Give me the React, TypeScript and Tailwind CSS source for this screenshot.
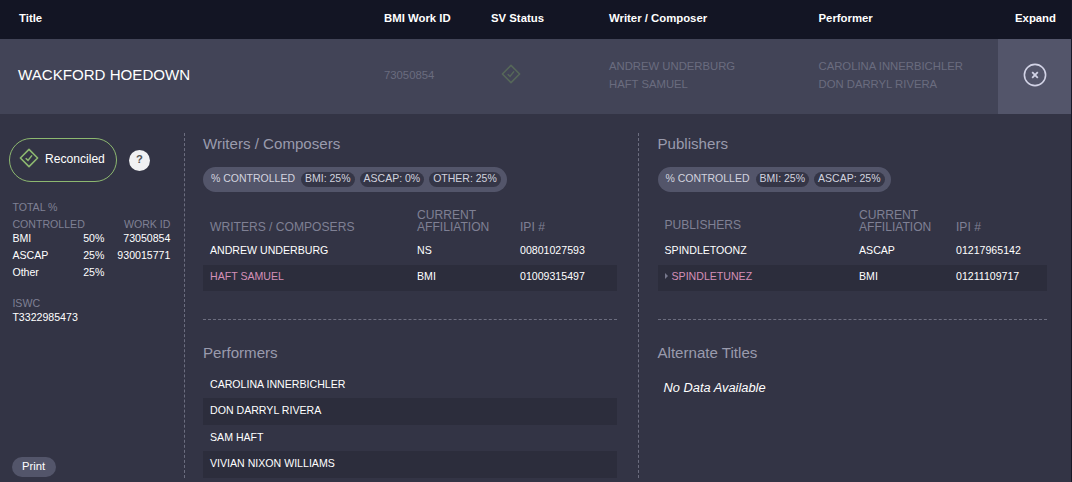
import clsx from "clsx";

interface Share {
  label: string;
  value: string;
}

interface PartyData {
  name: string;
  affiliation: string;
  ipi: string;
  highlighted?: boolean;
  expandable?: boolean;
}

const writers: PartyData[] = [
  { name: "ANDREW UNDERBURG", affiliation: "NS", ipi: "00801027593" },
  { name: "HAFT SAMUEL", affiliation: "BMI", ipi: "01009315497", highlighted: true },
];

const publishers: PartyData[] = [
  { name: "SPINDLETOONZ", affiliation: "ASCAP", ipi: "01217965142" },
  {
    name: "SPINDLETUNEZ",
    affiliation: "BMI",
    ipi: "01211109717",
    highlighted: true,
    expandable: true,
  },
];

const performers = [
  "CAROLINA INNERBICHLER",
  "DON DARRYL RIVERA",
  "SAM HAFT",
  "VIVIAN NIXON WILLIAMS",
];

const controlled = [
  { society: "BMI", share: "50%", workId: "73050854" },
  { society: "ASCAP", share: "25%", workId: "930015771" },
  { society: "Other", share: "25%", workId: "" },
];

const DiamondCheck = ({ className }: { className?: string }) => (
  <svg viewBox="0 0 20 20" fill="none" stroke="currentColor" className={className}>
    <path d="M10 1.4 18.6 10 10 18.6 1.4 10Z" strokeWidth="1.6" strokeLinejoin="round" />
    <path d="m6.7 10.2 2.3 2.2 4-5" strokeWidth="1.5" />
  </svg>
);

const SectionTitle = ({ children }: { children: string }) => (
  <h2 className="text-[15.1px] leading-[18px] text-[#9a9bad]">{children}</h2>
);

const ShareBar = ({ shares }: { shares: Share[] }) => (
  <div className="mt-3.5 flex h-[25px] w-fit items-center rounded-full bg-[#53556a] pr-1.5 pl-2 text-[10.5px] text-[#d2d3df]">
    <span className="mr-[6px] pb-[3px] leading-[14px]">% CONTROLLED</span>
    <div className="flex gap-[5px]">
      {shares.map((share) => (
        <span
          key={share.label}
          className="h-[15px] rounded-full bg-[#353647] px-[4px] leading-[13px]"
        >
          {share.label}: {share.value}
        </span>
      ))}
    </div>
  </div>
);

interface PartyTableProps {
  title: string;
  parties: PartyData[];
  columns: string;
  titleClass?: string;
}

const PartyTable = ({ title, parties, columns, titleClass }: PartyTableProps) => (
  <div className="mt-[17px]">
    <div
      className={clsx(
        "grid h-[30px] items-end pb-1.5 pl-[7px] text-[12.1px] leading-3 text-[#7f8094]",
        columns
      )}
    >
      <span className={titleClass}>{title}</span>
      <span>
        CURRENT
        <br />
        AFFILIATION
      </span>
      <span>IPI #</span>
    </div>
    {parties.map((party, i) => (
      <div
        key={party.ipi}
        className={clsx(
          "grid h-[26px] items-center pb-[3px] pl-[7px] text-[10.6px] text-white",
          columns,
          i % 2 === 1 && "bg-[#2c2d3c]"
        )}
      >
        <span className={clsx("flex items-center", party.highlighted && "text-[#d490b8]")}>
          {party.expandable && (
            <svg viewBox="0 0 3 6" className="mr-[4px] h-1.5 w-[3px]" fill="#77788c">
              <path d="M0 0 3 3 0 6Z" />
            </svg>
          )}
          {party.name}
        </span>
        <span>{party.affiliation}</span>
        <span>{party.ipi}</span>
      </div>
    ))}
  </div>
);

const Sidebar = () => (
  <aside className="flex w-[184px] flex-col pt-[5px] pb-px">
    <div className="flex items-center">
      <div className="ml-[9px] flex h-11 w-[108px] items-center rounded-full border border-[#8db870] pl-[9px]">
        <DiamondCheck className="mb-1 h-5 w-5 text-[#8db870]" />
        <span className="ml-[6px] pb-[2px] text-[12.1px] text-white">Reconciled</span>
      </div>
      <span className="ml-3 flex h-[21px] w-[21px] items-center justify-center rounded-full bg-[#f1f1f3] pb-[2px] text-[11.25px] font-bold text-[#555]">
        ?
      </span>
    </div>
    <div className="mt-[17px] ml-[12.4px] w-[158px] text-[10.6px] leading-[17px] text-white">
      <div className="flex items-end justify-between text-[#7f8094]">
        <span>
          TOTAL %
          <br />
          CONTROLLED
        </span>
        <span>WORK ID</span>
      </div>
      <div className="-mt-[3px]">
        {controlled.map((row) => (
          <div key={row.society} className="grid grid-cols-[55px_37px_1fr]">
            <span>{row.society}</span>
            <span className="text-right">{row.share}</span>
            <span className="text-right">{row.workId}</span>
          </div>
        ))}
      </div>
      <div className="mt-[15px] leading-[14px]">
        <div className="text-[#7f8094]">ISWC</div>
        <div>T3322985473</div>
      </div>
    </div>
    <button
      type="button"
      className="mt-auto ml-3 h-5 w-11 rounded-full bg-[#53556a] pr-px pb-px text-[11.25px] leading-[19px] text-white"
    >
      Print
    </button>
  </aside>
);

const workColumns = "grid-cols-[384px_107px_118px_209.5px_179.5px_73px]";

export default function App() {
  return (
    <div className="h-[482px] w-[1072px] overflow-hidden border-r border-[#181928] bg-[#333445] font-['Liberation_Sans',Arial,sans-serif]">
      <header
        className={clsx(
          "grid h-[39px] items-center bg-[#131524] pb-[2px] text-[11.35px] font-bold text-white",
          workColumns
        )}
      >
        <span className="pl-[19px]">Title</span>
        <span>BMI Work ID</span>
        <span>SV Status</span>
        <span>Writer / Composer</span>
        <span>Performer</span>
        <span className="pl-[17px]">Expand</span>
      </header>

      <div
        className={clsx(
          "grid h-[75px] items-center bg-[#424457] text-[11.3px] leading-[18px] text-[#6a6c7f]",
          workColumns
        )}
      >
        <span className="pb-[3px] pl-[18px] text-[15.1px] text-white">WACKFORD HOEDOWN</span>
        <span className="pb-[3px]">73050854</span>
        <DiamondCheck className="mb-[5px] ml-2.5 h-5 w-5 text-[#566759]" />
        <div className="pb-[3px]">
          <div>ANDREW UNDERBURG</div>
          <div>HAFT SAMUEL</div>
        </div>
        <div className="pb-[3px]">
          <div>CAROLINA INNERBICHLER</div>
          <div>DON DARRYL RIVERA</div>
        </div>
        <button
          type="button"
          className="flex h-full items-center justify-center bg-[#53556a] pb-[3px]"
        >
          <svg viewBox="0 0 24 24" className="h-6 w-6" fill="none" stroke="#d2d3e6">
            <circle cx="12" cy="12" r="10.6" strokeWidth="1.6" />
            <path d="m9.2 9.2 5.6 5.6m0-5.6-5.6 5.6" strokeWidth="1.8" />
          </svg>
        </button>
      </div>

      <main className="flex h-[368px] pt-[19px] pb-1">
        <Sidebar />

        <section className="w-[454px] border-l border-dashed border-[#6c6d7f] pt-[2px] pr-[21px] pl-[18px]">
          <SectionTitle>Writers / Composers</SectionTitle>
          <ShareBar
            shares={[
              { label: "BMI", value: "25%" },
              { label: "ASCAP", value: "0%" },
              { label: "OTHER", value: "25%" },
            ]}
          />
          <PartyTable
            title="WRITERS / COMPOSERS"
            parties={writers}
            columns="grid-cols-[207px_103px_1fr]"
          />
          <div className="mt-7 mb-6 border-t border-dashed border-[#6c6d7f]" />
          <SectionTitle>Performers</SectionTitle>
          <ul className="mt-[9.5px] text-[10.6px] text-white">
            {performers.map((name, i) => (
              <li
                key={name}
                className={clsx(
                  "flex h-[26.5px] items-center pl-[7px]",
                  i % 2 === 1 ? "bg-[#2c2d3c] pb-px" : "pt-px"
                )}
              >
                {name}
              </li>
            ))}
          </ul>
        </section>

        <section className="w-[433px] border-l border-dashed border-[#6c6d7f] pt-[2px] pr-6 pl-[18.5px]">
          <SectionTitle>Publishers</SectionTitle>
          <ShareBar
            shares={[
              { label: "BMI", value: "25%" },
              { label: "ASCAP", value: "25%" },
            ]}
          />
          <PartyTable
            title="PUBLISHERS"
            parties={publishers}
            columns="grid-cols-[194.5px_97px_1fr]"
            titleClass="pb-[2px]"
          />
          <div className="mt-7 mb-6 border-t border-dashed border-[#6c6d7f]" />
          <SectionTitle>Alternate Titles</SectionTitle>
          <p className="mt-[18px] ml-[6px] text-[12.85px] leading-4 text-white italic">
            No Data Available
          </p>
        </section>
      </main>
    </div>
  );
}
